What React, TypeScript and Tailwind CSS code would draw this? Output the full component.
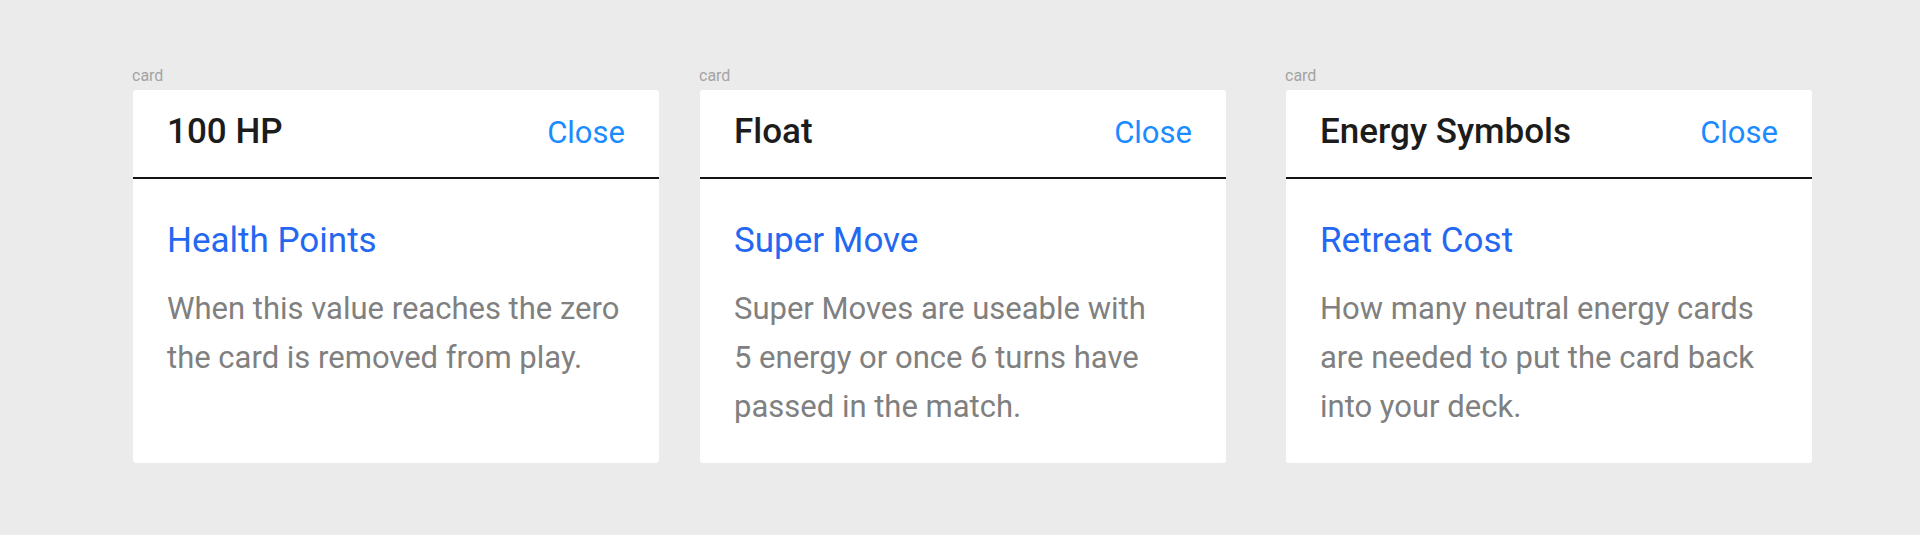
const cards = [
  {
    title: "100 HP",
    heading: "Health Points",
    lines: ["When this value reaches the zero", "the card is removed from play."],
    ml: "ml-[133px]",
  },
  {
    title: "Float",
    heading: "Super Move",
    lines: ["Super Moves are useable with", "5 energy or once 6 turns have", "passed in the match."],
    ml: "ml-[41px]",
  },
  {
    title: "Energy Symbols",
    heading: "Retreat Cost",
    lines: ["How many neutral energy cards", "are needed to put the card back", "into your deck."],
    ml: "ml-[60px]",
  },
]

const Card = ({ title, heading, lines, ml }: (typeof cards)[number]) => (
  <div className={`${ml} flex flex-col`}>
    <div className="h-4 mb-[6px] -ml-px text-[16px] leading-4 text-[#a3a3a3]">card</div>
    <div className="w-[526px] h-[373px] bg-white rounded-[3px]">
      <div className="flex items-baseline justify-between px-[34px] pt-[22px] pb-6 border-b-2 border-[#141414]">
        <span className="text-[35px] leading-10 font-medium text-[#1c1c1c]">{title}</span>
        <button className="text-[31px] leading-10 text-[#1a8cff]">Close</button>
      </div>
      <div className="px-[34px] pt-[42px]">
        <h3 className="text-[35px] leading-10 text-[#2468f2]">{heading}</h3>
        <p className="mt-[23px] text-[31px] leading-[49px] text-[#808080] whitespace-nowrap">
          {lines.map((l, i) => (
            <span key={i} className="block">{l}</span>
          ))}
        </p>
      </div>
    </div>
  </div>
)

export default function App() {
  return (
    <div className="w-[1920px] h-[535px] bg-[#ebebeb] pt-[68px] font-['Roboto',sans-serif]">
      <div className="flex">
        {cards.map((c) => (
          <Card key={c.title} {...c} />
        ))}
      </div>
    </div>
  )
}
